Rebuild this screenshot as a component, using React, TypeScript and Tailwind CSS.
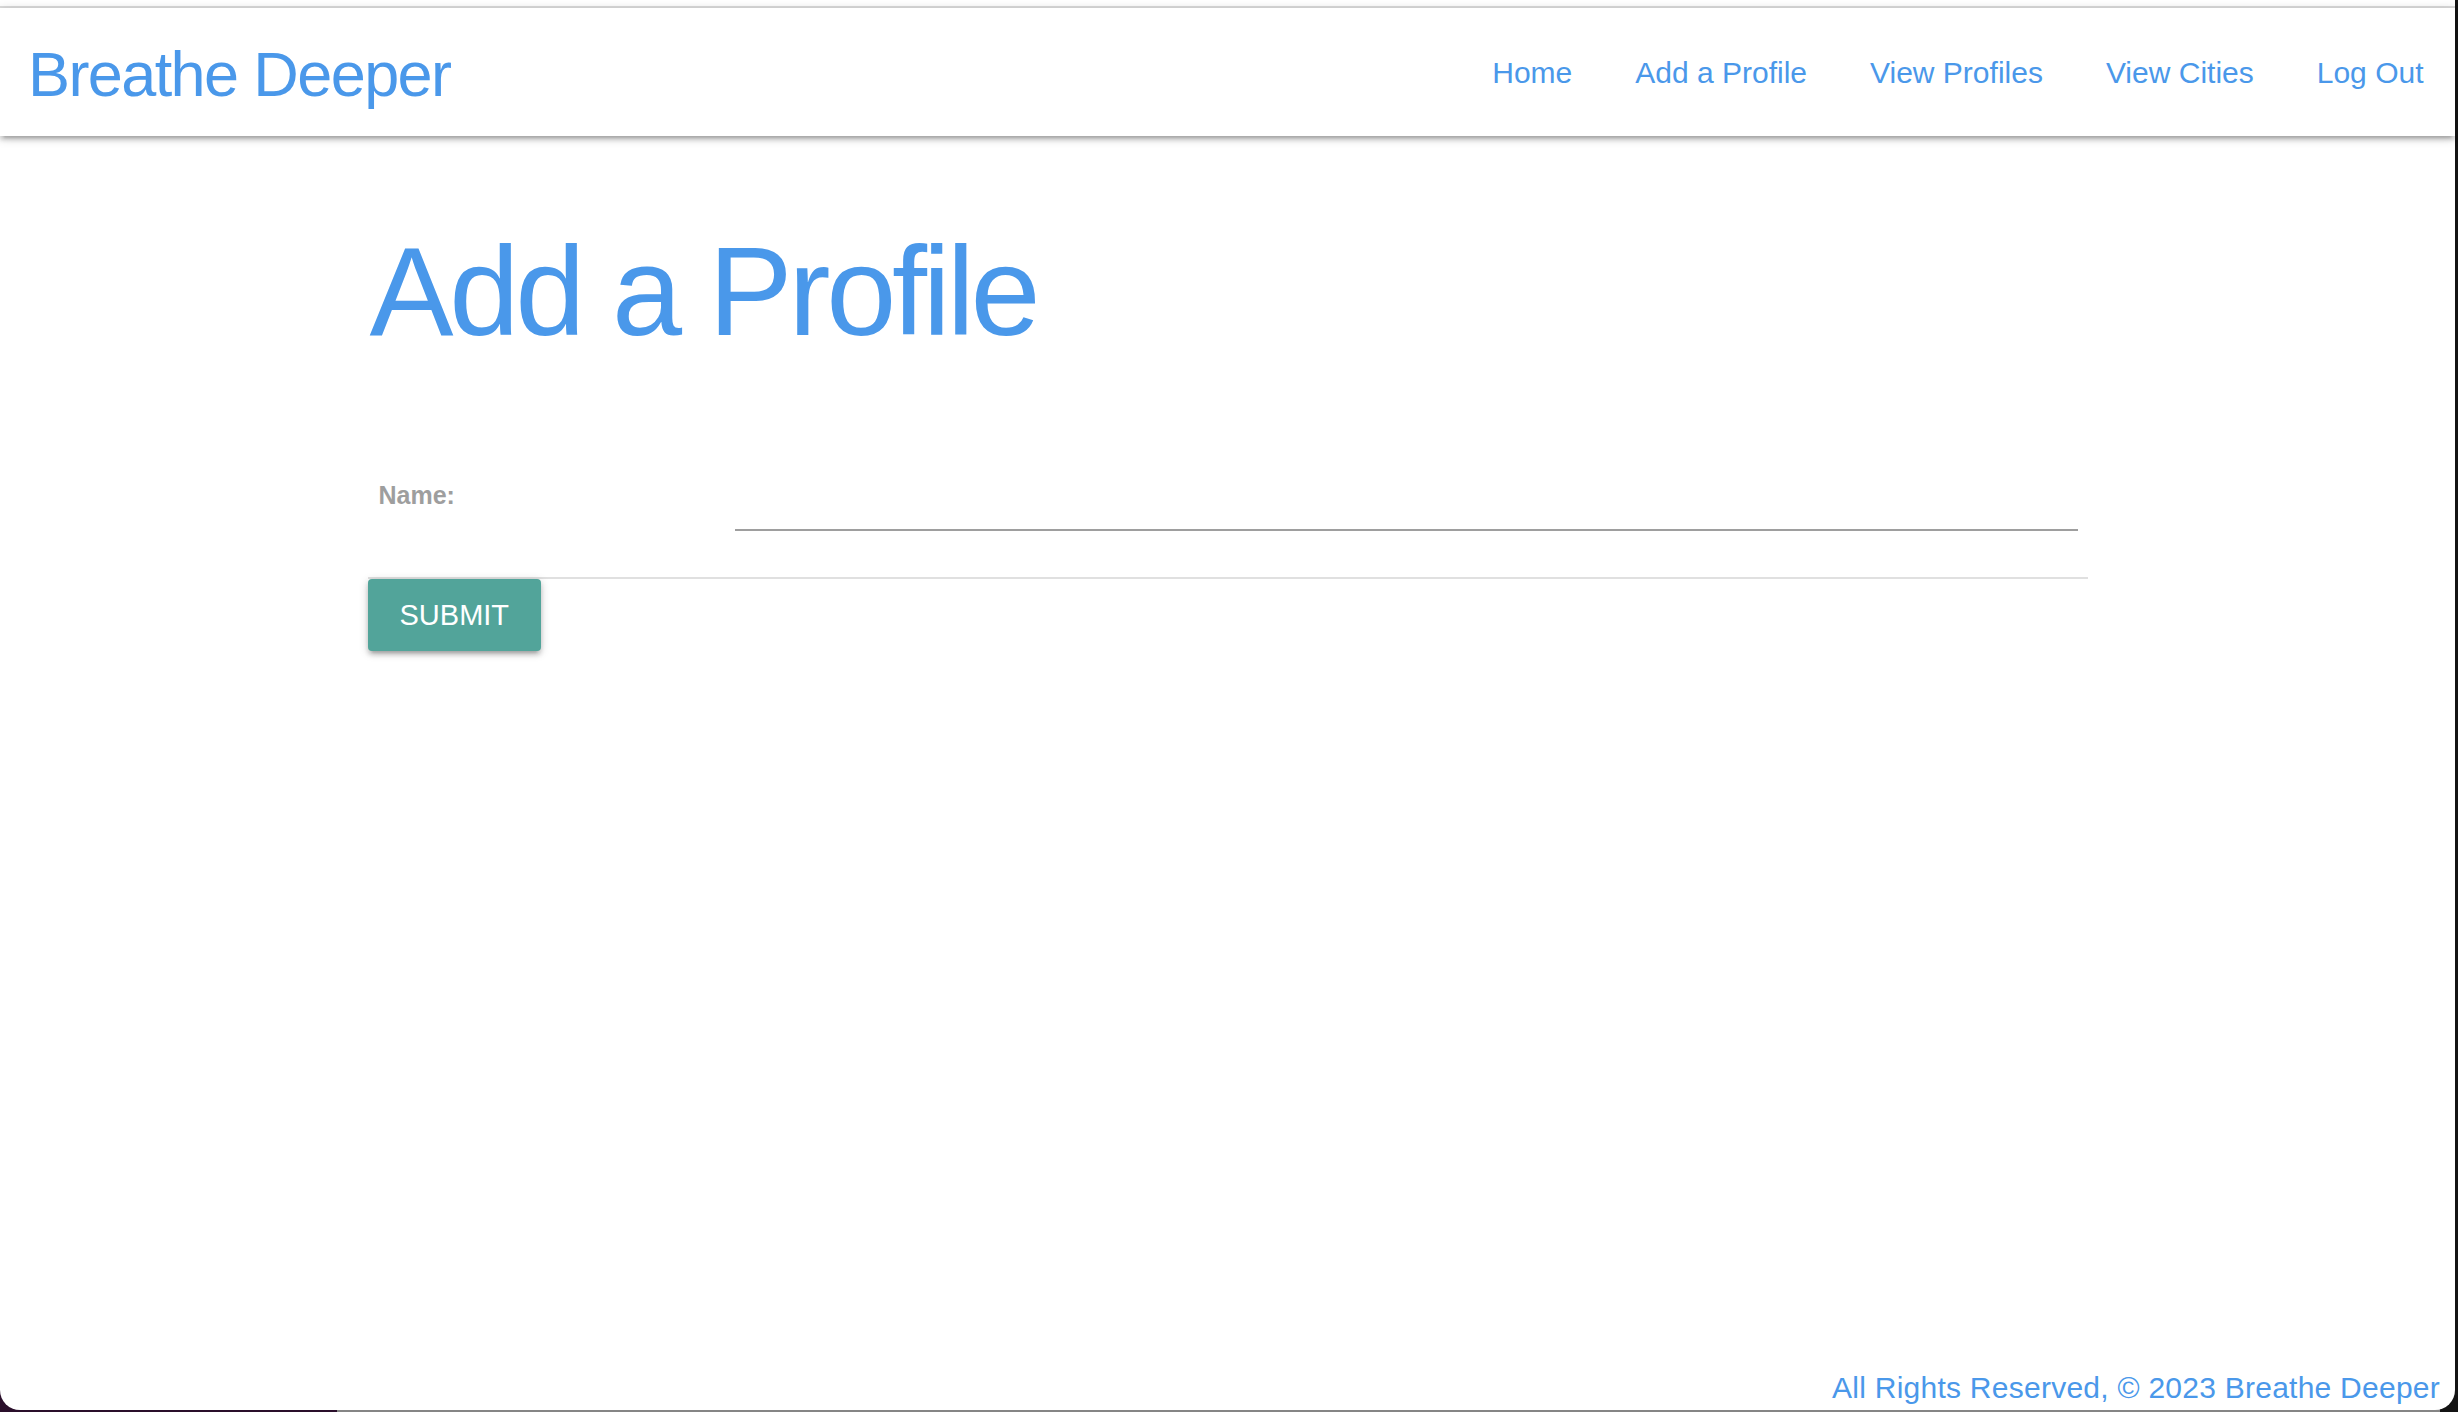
import React from "react";

const navLinks = [
  { path: "/", label: "Home" },
  { path: "/add", label: "Add a Profile" },
  { path: "/profiles", label: "View Profiles" },
  { path: "/cities", label: "View Cities" },
  { path: "/logout", label: "Log Out" },
];

function Header() {
  return (
    <nav className="h-[128px] shrink-0 flex items-center justify-between bg-white shadow-[0_4px_4px_0_rgba(0,0,0,0.14),0_6px_2px_-4px_rgba(0,0,0,0.12),0_2px_10px_0_rgba(0,0,0,0.2)] relative z-10">
      <a href="/" className="mt-[4px] pl-[28px] text-[63px] leading-none tracking-[-1.6px] text-[#4a98ea]">
        Breathe Deeper
      </a>
      <ul className="flex mt-[2px]">
        {navLinks.map((link) => (
          <li key={link.path}>
            <a href={link.path} className="block px-[31.5px] text-[30px] leading-none text-[#4a98ea]">
              {link.label}
            </a>
          </li>
        ))}
      </ul>
    </nav>
  );
}

function ProfileForm() {
  const [name, setName] = React.useState("");

  return (
    <form onSubmit={(e) => e.preventDefault()}>
      <div className="flex items-start py-[30px] border-b-2 border-[#e0e0e0]">
        <label htmlFor="name" className="w-[357px] shrink-0 pl-[11px] mt-[48px] text-[25px] leading-none font-bold text-[#9e9e9e]">
          Name:
        </label>
        <div className="flex-1 px-[10px]">
          <input
            id="name"
            value={name}
            onChange={(e) => setName(e.target.value)}
            className="block w-full h-[96px] mb-[16px] border-b-2 border-[#9e9e9e] bg-transparent text-[32px] outline-none"
          />
        </div>
      </div>
      <button
        type="submit"
        className="h-[72px] px-[32px] rounded-[4px] bg-[#52a49a] text-white text-[29px] leading-none uppercase shadow-[0_4px_4px_0_rgba(0,0,0,0.14),0_6px_2px_-4px_rgba(0,0,0,0.12),0_2px_10px_0_rgba(0,0,0,0.2)]"
      >
        Submit
      </button>
    </form>
  );
}

export default function App() {
  return (
    <div className="w-[2458px] h-[1412px] overflow-hidden bg-[linear-gradient(to_right,#2a0f2b_0px,#2a0f2b_337px,#858585_337px,#858585_2440px,#141414_2440px)] font-['Liberation_Sans',Arial,sans-serif]">
      <div className="w-[2455px] h-[1410px] bg-white rounded-b-[20px] flex flex-col">
        <div className="h-[6px] shrink-0" />
        <div className="h-[2px] shrink-0 bg-[#dcdcdc]" />
        <Header />

        <main className="w-[1720px] mx-auto">
          <h1 className="mt-[93px] ml-[2px] text-[126px] leading-none font-normal tracking-[-4.2px] text-[#4a98ea]">
            Add a Profile
          </h1>
          <div className="mt-[50px]">
            <ProfileForm />
          </div>
        </main>

        <footer className="mt-auto pb-[7px] pr-[15px] text-right text-[30px] leading-none tracking-[0.25px] text-[#4a98ea]">
          All Rights Reserved, © 2023 Breathe Deeper
        </footer>
      </div>
    </div>
  );
}
